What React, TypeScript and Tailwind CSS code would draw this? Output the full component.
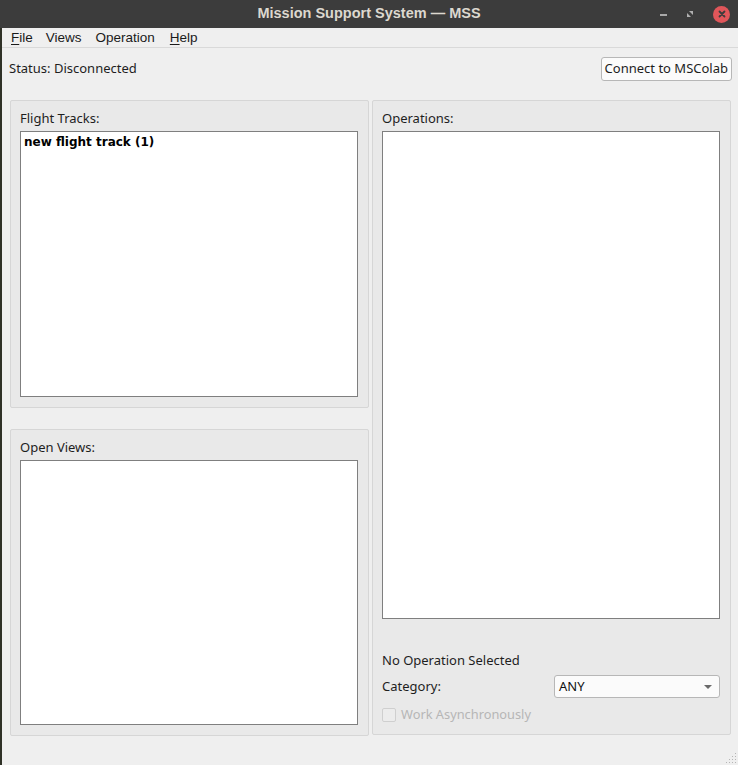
const ui = { fontFamily: '"Noto Sans", "DejaVu Sans", sans-serif' };
const menuFont = { fontFamily: '"Liberation Sans", "DejaVu Sans", sans-serif' };
const boldFont = { fontFamily: '"DejaVu Sans", "Noto Sans", sans-serif' };

function ListBox({ className = "", children }: { className?: string; children?: React.ReactNode }) {
  return <div className={`bg-white border border-[#7f7f7f] ${className}`}>{children}</div>;
}

function GroupBox({ label, className = "", children }: { label: string; className?: string; children?: React.ReactNode }) {
  return (
    <div className={`flex flex-col bg-[#e9e9e9] border border-[#d6d6d6] rounded-[2px] pl-[9px] pr-[10px] ${className}`}>
      <div className="h-[30px] flex items-center pt-[5px] text-[13px] text-[#1e1e1e]">{label}</div>
      {children}
    </div>
  );
}

export default function App() {
  return (
    <div className="w-[738px] h-[765px] flex flex-col bg-[#efefef] overflow-hidden" style={ui}>
      {/* title bar */}
      <div className="h-[28px] shrink-0 bg-[#3c3c3c] relative flex items-center justify-center">
        <span className="text-[14.5px] font-bold text-[#dcd8cf]" style={menuFont}>
          Mission Support System — MSS
        </span>
        <div className="absolute right-[8px] top-0 h-full flex items-center gap-[19px]">
          <div className="w-[7px] h-[2px] bg-[#a9a9a9] mt-[2px]" />
          <svg width="8" height="8" viewBox="0 0 8 8">
            <path d="M3 1h4v4z M1 3l4 4h-4z" fill="#b0b0b0" />
          </svg>
          <div className="w-[17px] h-[17px] rounded-full bg-[#e0565a] flex items-center justify-center">
            <svg width="8" height="8" viewBox="0 0 8 8">
              <path d="M1.5 1.5l5 5M6.5 1.5l-5 5" stroke="#3c3c3c" strokeWidth="1.8" strokeLinecap="round" />
            </svg>
          </div>
        </div>
      </div>

      <div className="flex-1 flex flex-col border-l-2 border-[#2f3127] relative">
        {/* menu bar */}
        <div className="h-[20px] flex items-center pt-[2px] border-b border-[#d9d9d9] text-[13.5px] text-[#1a1a1a]" style={menuFont}>
          <span className="ml-[9px]"><span className="underline underline-offset-2">F</span>ile</span>
          <span className="ml-[13px]">Views</span>
          <span className="ml-[14px]">Operation</span>
          <span className="ml-[15px]"><span className="underline underline-offset-2">H</span>elp</span>
        </div>

        {/* status row */}
        <div className="h-[40px] flex items-center justify-between pl-[7px] pr-[6px] pt-[1px]">
          <span className="text-[13px] text-[#1e1e1e]">Status: Disconnected</span>
          <button className="h-[24px] px-[3px] bg-[#fbfbfb] border border-[#b7b7b7] rounded-[3px] text-[13px] text-[#1e1e1e]">
            Connect to MSColab
          </button>
        </div>

        {/* main */}
        <div className="flex gap-[3px] pl-[8px] mt-[12px]">
          <div className="w-[359px] flex flex-col gap-[21px]">
            <GroupBox label="Flight Tracks:" className="h-[308px]">
              <ListBox className="h-[266px]">
                <div className="px-[3px] pt-[1px] text-[12px] font-bold text-black" style={boldFont}>new flight track (1)</div>
              </ListBox>
            </GroupBox>
            <GroupBox label="Open Views:" className="h-[307px]">
              <ListBox className="h-[265px]" />
            </GroupBox>
          </div>

          <GroupBox label="Operations:" className="w-[359px] h-[635px]">
            <ListBox className="h-[488px]" />
            <div className="mt-[33px] text-[13px] text-[#1e1e1e] h-[16px] leading-[16px]">No Operation Selected</div>
            <div className="mt-[7px] flex items-center justify-between">
              <span className="text-[13px] text-[#1e1e1e]">Category:</span>
              <div className="w-[166px] h-[23px] bg-[#fbfbfb] border border-[#b7b7b7] rounded-[3px] flex items-center justify-between pl-[4px] pr-[7px]">
                <span className="text-[13px] text-[#111]">ANY</span>
                <svg width="8" height="4" viewBox="0 0 8 4">
                  <path d="M0 0h8l-4 4z" fill="#6a6a6a" />
                </svg>
              </div>
            </div>
            <div className="mt-[7px] flex items-center">
              <div className="w-[14px] h-[14px] border border-[#cfcfcf] rounded-[2px] bg-[#ececec]" />
              <span className="ml-[5px] text-[12.8px] text-[#b6b6b6]">Work Asynchronously</span>
            </div>
          </GroupBox>
        </div>

        {/* size grip */}
        <svg className="absolute right-[1px] bottom-[1px]" width="11" height="11" viewBox="0 0 11 11">
          {[
            [9, 1], [9, 4], [6, 4], [9, 7], [6, 7], [3, 7], [9, 10], [6, 10], [3, 10], [0, 10],
          ].map(([x, y], i) => (
            <rect key={i} x={x} y={y - 1} width="1" height="1" fill="#b5b5b5" />
          ))}
        </svg>
      </div>
    </div>
  );
}
